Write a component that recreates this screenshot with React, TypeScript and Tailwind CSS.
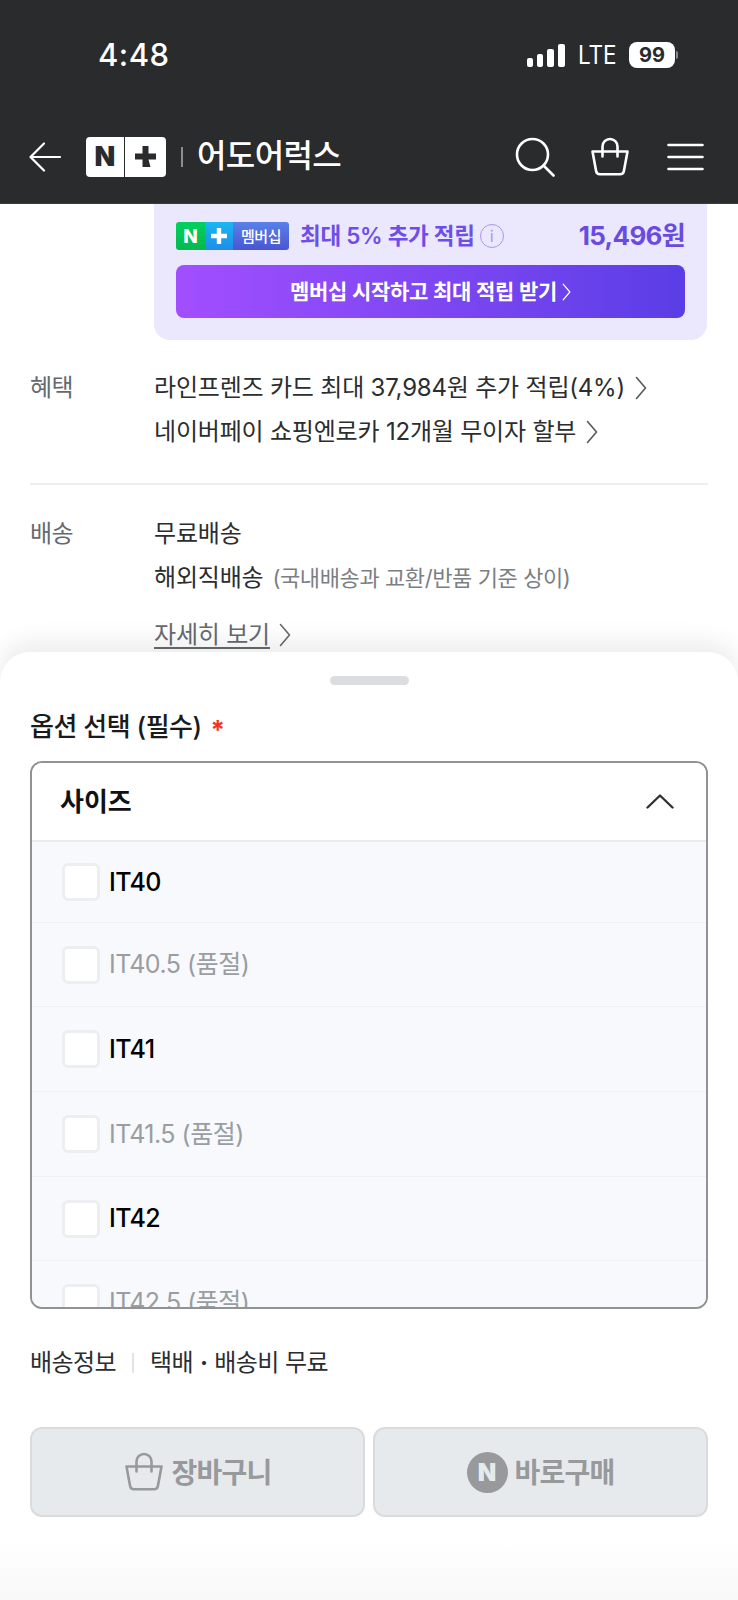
const FONT = "font-['Inter','Noto_Sans_CJK_KR',sans-serif]";

const sizes = [
  { label: "IT40", soldOut: false, h: "h-[81px]" },
  { label: "IT40.5 (품절)", soldOut: true, h: "h-[84px]" },
  { label: "IT41", soldOut: false, h: "h-[85px]" },
  { label: "IT41.5 (품절)", soldOut: true, h: "h-[85px]" },
  { label: "IT42", soldOut: false, h: "h-[84px]" },
  { label: "IT42.5 (품절)", soldOut: true, h: "h-[84px]" },
];

function BagIcon({ className }: { className?: string }) {
  return (
    <svg viewBox="0 0 40 40" fill="none" stroke="currentColor" strokeWidth="2.6" strokeLinejoin="round" strokeLinecap="round" className={className}>
      <path d="M2.5 14.5h35l-3.6 19.5a4 4 0 0 1-4 3.3H10.1a4 4 0 0 1-4-3.3L2.5 14.5z" />
      <path d="M12.5 19.5V9.5a7.5 7.5 0 0 1 15 0v10" />
    </svg>
  );
}

function Chevron({ className }: { className?: string }) {
  return (
    <svg viewBox="0 0 12 24" fill="none" stroke="currentColor" strokeWidth="1.6" strokeLinecap="round" strokeLinejoin="round" className={className}>
      <path d="M1.5 1.5L10.5 12L1.5 22.5" />
    </svg>
  );
}

function PlusMark({ className }: { className?: string }) {
  return (
    <svg viewBox="0 0 21 21" fill="currentColor" className={className}>
      <path d="M7.5 0h6v7.5H21v6h-7.5l2 7.5h-8V13.5H0v-6h7.5z" />
    </svg>
  );
}

function StatusBar() {
  return (
    <div className="h-[114px] pl-[98px] pr-[60px] pt-[36px] flex justify-between items-start">
      <span className="text-[31px] leading-[38px] font-medium text-white tracking-[0.5px]">4:48</span>
      <div className="flex items-center gap-[13px] h-[38px]">
        <div className="flex items-end gap-[4px] h-[24px]">
          <span className="w-[6px] h-[9px] rounded-[2px] bg-white" />
          <span className="w-[6px] h-[13px] rounded-[2px] bg-white" />
          <span className="w-[7px] h-[18px] rounded-[2px] bg-white" />
          <span className="w-[7px] h-[23px] rounded-[2px] bg-white" />
        </div>
        <span className="text-[25px] leading-none font-normal text-white scale-x-90 origin-left w-[38px]">LTE</span>
        <div className="flex items-center">
          <span className="w-[46px] h-[26px] rounded-[8px] bg-white text-[#292b2d] text-[20px] leading-[26px] font-bold text-center">99</span>
          <span className="w-[2px] h-[8px] ml-[1px] rounded-r bg-[#8a8a8a]" />
        </div>
      </div>
    </div>
  );
}

function NavBar() {
  return (
    <div className="h-[90px] pl-[29px] pr-[34px] flex items-center border-b border-[#3a3c3e]">
      <svg viewBox="0 0 32 30" fill="none" stroke="white" strokeWidth="2.2" strokeLinecap="round" strokeLinejoin="round" className="w-[32px] h-[30px] mb-[4px]">
        <path d="M1.5 15H31M15 1.5L1.5 15L15 28.5" />
      </svg>
      <div className="ml-[25px] mb-[4px] w-[80px] h-[40px] rounded-[4px] bg-white flex overflow-hidden">
        <div className="w-[39px] flex items-center justify-center border-r border-[#292b2d]">
          <span className="text-[27px] leading-none font-black text-[#292b2d]">N</span>
        </div>
        <div className="flex-1 flex items-center justify-center">
          <PlusMark className="w-[21px] h-[21px] text-[#292b2d]" />
        </div>
      </div>
      <span className="ml-[15px] mb-[4px] w-[2px] h-[20px] bg-[#8c8e90]" />
      <span className="ml-[14px] mb-[6px] text-[32px] leading-none font-medium text-white tracking-[-0.6px]">어도어럭스</span>
      <div className="ml-auto flex items-center mb-[4px]">
        <svg viewBox="0 0 40 40" fill="none" stroke="white" strokeWidth="2.6" strokeLinecap="round" className="w-[40px] h-[40px]">
          <circle cx="17.5" cy="17.5" r="15.5" />
          <path d="M28.5 28.5L38.5 38.5" />
        </svg>
        <BagIcon className="ml-[35px] w-[40px] h-[40px] text-white" />
        <svg viewBox="0 0 37 28" fill="none" stroke="white" strokeWidth="2.6" strokeLinecap="round" className="ml-[37px] w-[37px] h-[28px]">
          <path d="M1.5 2h34M1.5 14h34M1.5 26h34" />
        </svg>
      </div>
    </div>
  );
}

function MembershipCard() {
  return (
    <div className="ml-[154px] mr-[31px] h-[136px] rounded-b-[16px] bg-[#ebe7fd] px-[22px] pt-[18px]">
      <div className="flex items-center h-[28px]">
        <div className="w-[113px] h-[28px] rounded-[3px] overflow-hidden flex">
          <div className="w-[29px] bg-gradient-to-b from-[#00d060] to-[#05b84f] flex items-center justify-center text-white text-[19px] font-extrabold leading-none">N</div>
          <div className="w-[28px] bg-gradient-to-b from-[#1cb6f2] to-[#1f8cea] flex items-center justify-center text-white">
            <svg viewBox="0 0 16 16" fill="currentColor" className="w-[16px] h-[16px]">
              <path d="M5.8 0h4.4v5.8H16v4.4h-5.8V16H5.8v-5.8H0V5.8h5.8z" />
            </svg>
          </div>
          <div className="flex-1 bg-gradient-to-b from-[#5a80e8] to-[#4a55d2] flex items-center justify-center text-white text-[15px] font-medium leading-none tracking-[-0.5px]">멤버십</div>
        </div>
        <span className="ml-[11px] text-[22.5px] leading-none font-semibold text-[#6d4ee8] tracking-[-0.3px]">최대 5% 추가 적립</span>
        <span className="ml-[5px] w-[24px] h-[24px] rounded-full border border-[#a797ee] text-[#a797ee] text-[16px] leading-[22px] text-center">i</span>
        <span className="ml-auto text-[26px] leading-none font-bold text-[#6a4be0] tracking-[-0.7px]">15,496원</span>
      </div>
      <div className="mt-[15px] h-[53px] rounded-[8px] bg-gradient-to-r from-[#a24eff] to-[#5a3de6] flex items-center justify-center gap-[5px] text-white">
        <span className="text-[21px] leading-none font-semibold tracking-[-0.3px]">멤버십 시작하고 최대 적립 받기</span>
        <Chevron className="w-[9px] h-[18px]" />
      </div>
    </div>
  );
}

function InfoSection() {
  return (
    <div className="px-[30px] text-[#2b2d2f]">
      <div className="flex pt-[26px] pb-[29px] border-b-2 border-[#eeeeee]">
        <span className="w-[124px] text-[24px] leading-[44px] text-[#666a6e] tracking-[-0.5px]">혜택</span>
        <div className="flex flex-col text-[24px] leading-[44px] tracking-[-0.2px]">
          <div className="flex items-center gap-[10px]">
            <span>라인프렌즈 카드 최대 37,984원 추가 적립(4%)</span>
            <Chevron className="w-[12px] h-[24px] text-[#55585b]" />
          </div>
          <div className="flex items-center gap-[10px]">
            <span>네이버페이 쇼핑엔로카 12개월 무이자 할부</span>
            <Chevron className="w-[12px] h-[24px] text-[#55585b]" />
          </div>
        </div>
      </div>
      <div className="flex pt-[27px]">
        <span className="w-[124px] text-[24px] leading-[44px] text-[#666a6e] tracking-[-0.5px]">배송</span>
        <div className="flex flex-col text-[24px] leading-[44px] tracking-[-0.2px]">
          <span>무료배송</span>
          <div className="flex items-center gap-[9px]">
            <span>해외직배송</span>
            <span className="text-[22px] text-[#7b7f83] tracking-[-0.4px]">(국내배송과 교환/반품 기준 상이)</span>
          </div>
          <div className="flex items-center gap-[9px] mt-[13px] text-[#666a6e]">
            <span className="underline underline-offset-[4px]">자세히 보기</span>
            <Chevron className="w-[12px] h-[24px]" />
          </div>
        </div>
      </div>
    </div>
  );
}

function SizeRow({ label, soldOut, h }: { label: string; soldOut: boolean; h: string }) {
  return (
    <div className={`${h} shrink-0 flex items-center pl-[30px] border-b border-[#eff1f4]`}>
      <span className="w-[38px] h-[38px] rounded-[6px] bg-white border-[3px] border-[#eceef1]" />
      <span className={`ml-[9px] text-[25px] leading-none tracking-[-0.5px] ${soldOut ? "text-[#9a9da1]" : "text-black font-medium"}`}>{label}</span>
    </div>
  );
}

function BottomSheet() {
  return (
    <div className="absolute inset-x-0 top-[652px] bottom-0 rounded-t-[30px] bg-white shadow-[0_-10px_24px_rgba(0,0,0,0.08)] flex flex-col px-[30px]">
      <div className="mt-[24px] mx-auto w-[79px] h-[9px] rounded-full bg-[#dcdde0]" />
      <div className="mt-[25px] flex items-center h-[34px]">
        <span className="text-[26px] leading-none font-medium text-[#1a1a1a] tracking-[-0.5px]">옵션 선택 (필수)</span>
        <span className="ml-[9px] text-[26px] leading-none font-bold text-[#f0361f] mt-[6px]">*</span>
      </div>
      <div className="mt-[17px] h-[548px] rounded-[12px] border-2 border-[#909295] overflow-hidden flex flex-col">
        <div className="h-[79px] shrink-0 flex items-center justify-between pl-[28px] pr-[32px] border-b-2 border-[#e9ebee] bg-white">
          <span className="text-[26px] leading-none font-semibold text-[#111]">사이즈</span>
          <svg viewBox="0 0 28 15" fill="none" stroke="#333" strokeWidth="2.4" strokeLinecap="round" strokeLinejoin="round" className="w-[28px] h-[15px]">
            <path d="M1.5 13.5L14 1.5L26.5 13.5" />
          </svg>
        </div>
        <div className="flex-1 bg-[#f7f9fc] overflow-hidden">
          {sizes.map((s) => (
            <SizeRow key={s.label} label={s.label} soldOut={s.soldOut} h={s.h} />
          ))}
        </div>
      </div>
      <div className="mt-[38px] flex items-center h-[32px] text-[24px] leading-none text-[#2b2d2f] tracking-[-0.6px]">
        <span>배송정보</span>
        <span className="mx-[16px] w-[2px] h-[20px] bg-[#e2e3e5]" />
        <span>택배</span>
        <span className="mx-[7px] font-bold">·</span>
        <span>배송비 무료</span>
      </div>
      <div className="mt-[48px] flex gap-[8px]">
        <div className="flex-1 h-[90px] rounded-[12px] bg-[#e7eaed] border-2 border-[#d9dcdf] flex items-center justify-center gap-[8px] text-[#98999b]">
          <BagIcon className="w-[40px] h-[40px]" />
          <span className="mt-[2px] text-[28px] leading-none font-semibold tracking-[-0.8px]">장바구니</span>
        </div>
        <div className="flex-1 h-[90px] rounded-[12px] bg-[#e7eaed] border-2 border-[#d9dcdf] flex items-center justify-center gap-[7px] text-[#98999b]">
          <span className="w-[41px] h-[41px] rounded-full bg-[#98999b] text-[#e7eaed] text-[24px] leading-[41px] font-black text-center">N</span>
          <span className="mt-[2px] text-[28px] leading-none font-semibold tracking-[-0.8px]">바로구매</span>
        </div>
      </div>
      <div className="absolute inset-x-0 bottom-0 h-[60px] bg-gradient-to-b from-white to-[#f8f8f8]" />
    </div>
  );
}

export default function App() {
  return (
    <div className={`${FONT} relative w-[738px] h-[1600px] overflow-hidden bg-white`}>
      <div className="bg-[#292b2d]">
        <StatusBar />
        <NavBar />
      </div>
      <MembershipCard />
      <InfoSection />
      <BottomSheet />
    </div>
  );
}
